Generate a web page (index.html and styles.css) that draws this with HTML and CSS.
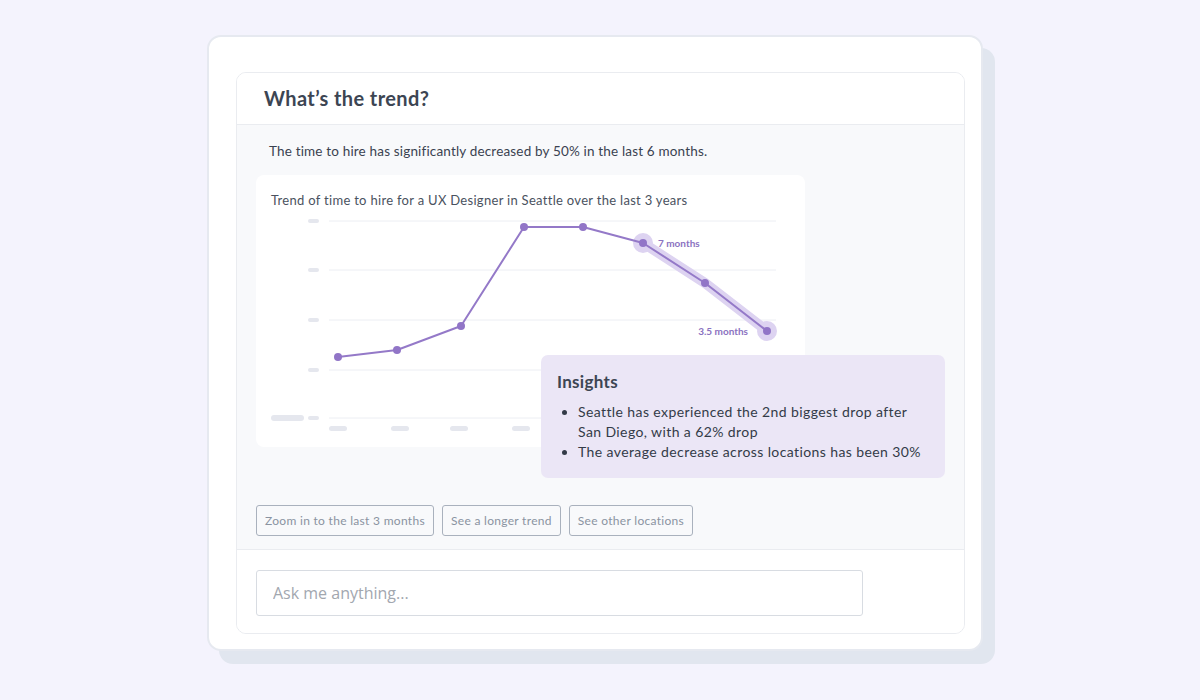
FILE: index.html
```html
<!DOCTYPE html>
<html lang="en">
<head>
  <meta charset="UTF-8" />
  <title>What's the trend?</title>
  <link rel="stylesheet" href="styles.css">
</head>
<body>

  <div class="frame">
    <section class="panel">
      <header class="panel-head">
        <h2>What’s the trend?</h2>
      </header>

      <div class="panel-body">
        <p class="summary">The time to hire has significantly decreased by 50% in the last 6 months.</p>

        <div class="chart-card">
          <div class="chart-title">Trend of time to hire for a UX Designer in Seattle over the last 3 years</div>
          <svg class="chart" width="549" height="239" viewBox="0 0 549 239">
            <!-- grid -->
            <g stroke="#eceef3" stroke-width="1">
              <line x1="73" y1="13" x2="520" y2="13" />
              <line x1="73" y1="62" x2="520" y2="62" />
              <line x1="73" y1="112" x2="520" y2="112" />
              <line x1="73" y1="162" x2="520" y2="162" />
              <line x1="73" y1="210" x2="520" y2="210" />
            </g>
            <!-- axis label placeholders -->
            <g fill="#e5e7ee">
              <rect x="52" y="11" width="11" height="4" rx="2" />
              <rect x="52" y="60" width="11" height="4" rx="2" />
              <rect x="52" y="110" width="11" height="4" rx="2" />
              <rect x="52" y="160" width="11" height="4" rx="2" />
              <rect x="52" y="208" width="11" height="4" rx="2" />
              <rect x="15" y="207" width="33" height="6" rx="3" />
              <rect x="73" y="218" width="18" height="5" rx="2.5" />
              <rect x="135" y="218" width="18" height="5" rx="2.5" />
              <rect x="194" y="218" width="18" height="5" rx="2.5" />
              <rect x="256" y="218" width="18" height="5" rx="2.5" />
              <rect x="318" y="218" width="18" height="5" rx="2.5" />
            </g>
            <!-- highlighted drop -->
            <polyline points="387,35 449,75 511,123" fill="none" stroke="#ddd3f1" stroke-width="10" stroke-linecap="round" stroke-linejoin="round" />
            <circle cx="387" cy="35" r="10" fill="#ddd3f1" />
            <circle cx="511" cy="123" r="10" fill="#ddd3f1" />
            <!-- series -->
            <polyline points="82,149 141,142 205,118 268,19 327,19 387,35 449,75 511,123" fill="none" stroke="#9479c8" stroke-width="2" stroke-linejoin="round" />
            <g fill="#9175c7">
              <circle cx="82" cy="149" r="4" />
              <circle cx="141" cy="142" r="4" />
              <circle cx="205" cy="118" r="4" />
              <circle cx="268" cy="19" r="4" />
              <circle cx="327" cy="19" r="4" />
              <circle cx="387" cy="35" r="4" />
              <circle cx="449" cy="75" r="4" />
              <circle cx="511" cy="123" r="4" />
            </g>
            <text class="point-label" x="402" y="38.5">7 months</text>
            <text class="point-label" x="492" y="126.5" text-anchor="end">3.5 months</text>
          </svg>
        </div>

        <div class="insights">
          <h3>Insights</h3>
          <ul>
            <li>Seattle has experienced the 2nd biggest drop after San Diego, with a 62% drop</li>
            <li>The average decrease across locations has been 30%</li>
          </ul>
        </div>

        <div class="suggestions">
          <button class="chip">Zoom in to the last 3 months</button>
          <button class="chip">See a longer trend</button>
          <button class="chip">See other locations</button>
        </div>
      </div>

      <footer class="panel-foot">
        <input class="ask" type="text" placeholder="Ask me anything..." />
      </footer>
    </section>
  </div>

</body>
</html>
```

FILE: styles.css
```css
body {
  margin: 0;
  min-height: 700px;
  padding-top: 35px;
  box-sizing: border-box;
  background-color: #f4f3fd;
  font-family: Lato, "Open Sans", sans-serif;
  color: #3b4351;
}

.frame {
  width: 776px;
  height: 616px;
  margin-left: 207px;
  padding: 35px 17px 0 27px;
  box-sizing: border-box;
  background-color: #fff;
  border: 2px solid #e6e9f0;
  border-radius: 14px;
  box-shadow: 12px 13px 0 #e1e6ef;
}

.panel {
  border: 1px solid #eaecf0;
  border-radius: 10px;
  overflow: hidden;
  width: 729px;
  box-sizing: border-box;
}

.panel-head {
  height: 51px;
  padding: 0 27px;
  display: flex;
  align-items: center;
  border-bottom: 1px solid #eaecf0;
  background-color: #fff;
}

.panel-head h2 {
  margin: 0;
  padding-bottom: 2px;
  font-size: 20px;
  font-weight: 700;
  letter-spacing: 0.4px;
  color: #3c4553;
}

.panel-body {
  position: relative;
  background-color: #f8f9fb;
  padding: 17px 19px 13px;
  border-bottom: 1px solid #eaecf0;
}

.summary {
  margin: 0 0 15px 13px;
  font-size: 13.5px;
  line-height: 18px;
  letter-spacing: 0.17px;
  color: #3a4250;
}

.chart-card {
  width: 549px;
  height: 272px;
  background-color: #fff;
  border-radius: 8px;
  box-sizing: border-box;
}

.chart-title {
  padding: 17px 15px 0;
  font-size: 13px;
  line-height: 16px;
  letter-spacing: 0.3px;
  color: #4a5260;
}

.chart {
  display: block;
}

.point-label {
  font-family: Lato, sans-serif;
  font-size: 10px;
  font-weight: 700;
  fill: #8b72c1;
}

.insights {
  position: absolute;
  left: 304px;
  top: 230px;
  width: 404px;
  height: 123px;
  box-sizing: border-box;
  padding: 16px 16px 0;
  background-color: #ebe6f6;
  border-radius: 7px;
}

.insights h3 {
  margin: 0 0 10px;
  font-size: 17px;
  font-weight: 700;
  letter-spacing: 0.3px;
  color: #3c4553;
}

.insights ul {
  margin: 0;
  padding-left: 21px;
  font-size: 14px;
  line-height: 20px;
  letter-spacing: 0.4px;
  color: #333b48;
}

.suggestions {
  display: flex;
  gap: 8px;
  margin-top: 58px;
}

.chip {
  height: 31px;
  padding: 0 8px;
  background-color: transparent;
  border: 1px solid #a9b1bd;
  border-radius: 3px;
  font-family: Lato, sans-serif;
  font-size: 12px;
  letter-spacing: 0.3px;
  color: #8a93a1;
  cursor: pointer;
}

.panel-foot {
  background-color: #fff;
  padding: 20px 19px 17px;
}

.ask {
  display: block;
  width: 607px;
  height: 46px;
  box-sizing: border-box;
  padding: 0 16px;
  border: 1px solid #d8dce2;
  border-radius: 3px;
  font-family: "Open Sans", sans-serif;
  font-size: 16px;
  color: #3b4351;
}

.ask::placeholder {
  color: #a2a7af;
}
```
